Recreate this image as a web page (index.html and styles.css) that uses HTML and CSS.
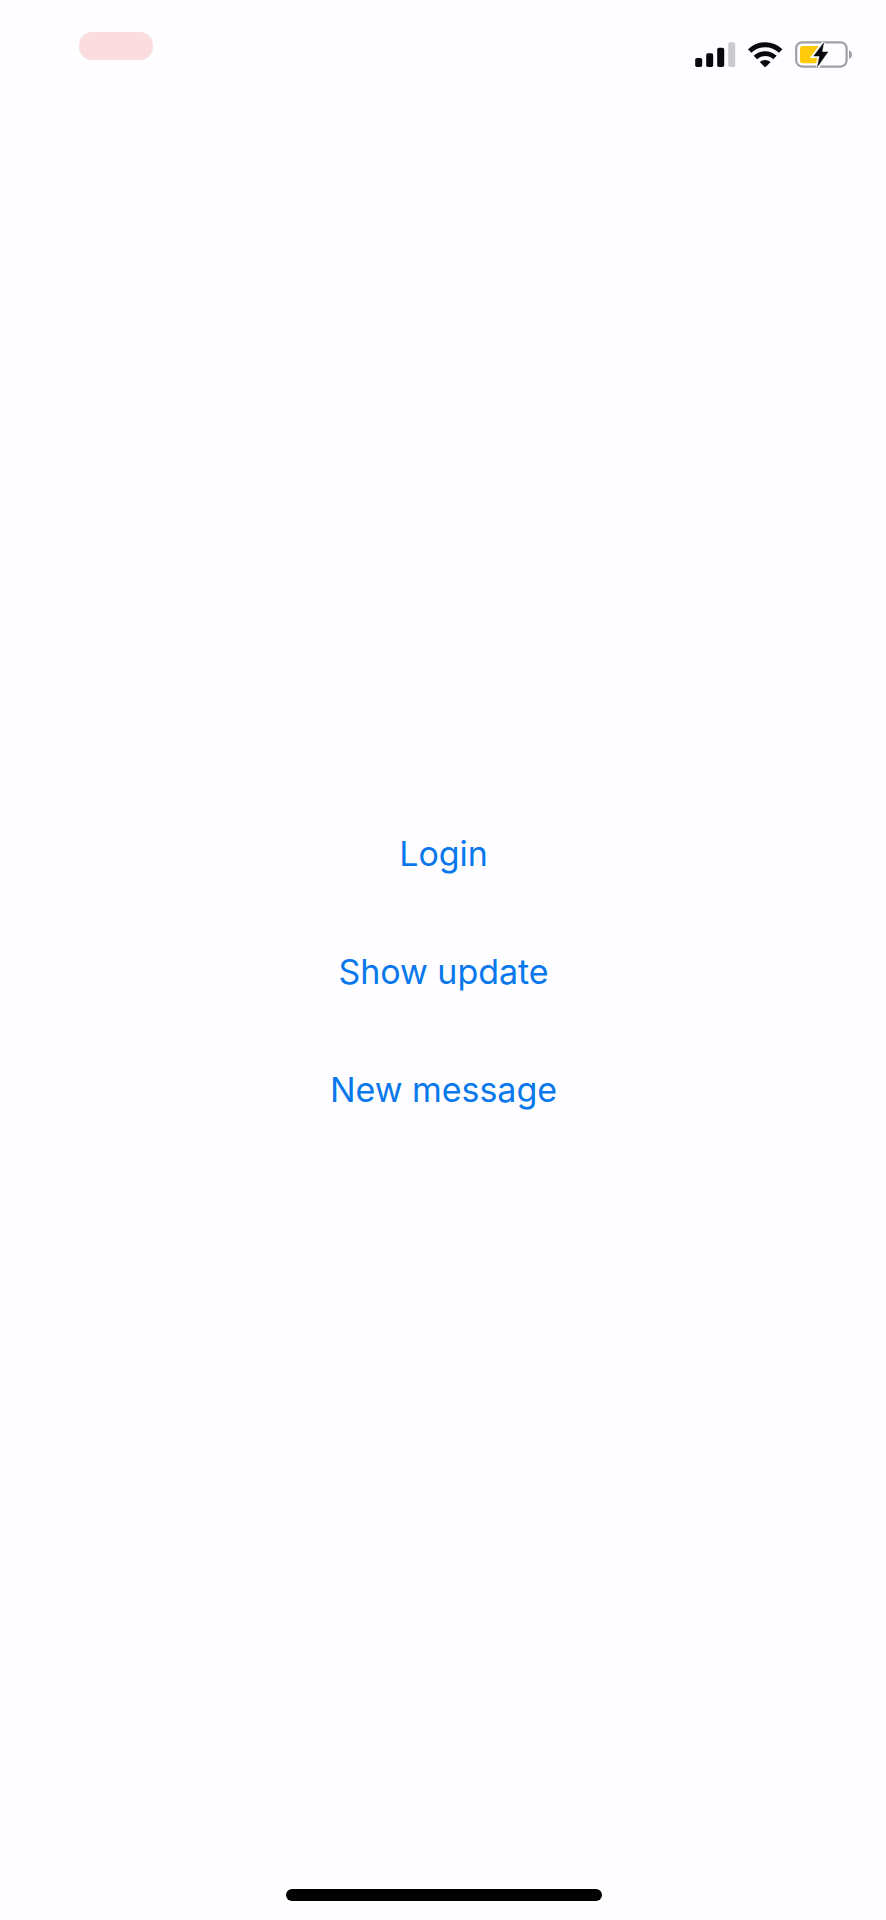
FILE: index.html
```html
<!DOCTYPE html>
<html lang="en">
<head>
<meta charset="utf-8">
<title>Home</title>
<link rel="stylesheet" href="styles.css">
</head>
<body>
<div class="screen">
  <header class="status-bar">
    <div class="time-pill"></div>
    <div class="indicators">
      <svg class="signal" width="41" height="26" viewBox="0 0 41 26">
        <rect x="0.2" y="16" width="7" height="9" rx="1.8"/>
        <rect x="11.2" y="11.3" width="7" height="13.7" rx="1.8"/>
        <rect x="22.2" y="5.8" width="7" height="19.2" rx="1.8"/>
        <rect class="signal-off" x="33.2" y="0.3" width="7" height="24.7" rx="1.8"/>
      </svg>
      <svg class="wifi" width="36" height="26" viewBox="0 0 36 26">
        <path class="wave" d="M2.7 9 A22.3 22.3 0 0 1 33.7 9"/>
        <path class="wave" d="M8.4 15.6 A14 14 0 0 1 28 15.6"/>
        <path d="M12.7 20 Q18.2 15.8 23.7 20 L18.9 24.7 Q18.2 25.3 17.5 24.7 Z"/>
      </svg>
      <svg class="battery" width="58" height="30" viewBox="0 0 58 30">
        <rect class="shell" x="1.2" y="2.3" width="50.4" height="24.3" rx="6"/>
        <rect class="charge" x="5" y="6" width="21" height="17.2" rx="2.5"/>
        <path class="cap" d="M54 10.2 Q57 11.5 57 14.6 Q57 17.7 54 19 Z"/>
        <path class="bolt-gap" d="M28.6 3 L18.8 16 H24.6 L22.6 26.5 L32.8 12 H26.9 Z"/>
        <path class="bolt" d="M28.6 3 L18.8 16 H24.6 L22.6 26.5 L32.8 12 H26.9 Z"/>
      </svg>
    </div>
  </header>
  <main class="actions">
    <button class="action login">Login</button>
    <button class="action update">Show update</button>
    <button class="action message">New message</button>
  </main>
  <footer class="home-area"><div class="home-bar"></div></footer>
</div>
</body>
</html>
```
FILE: styles.css
```css
body { margin: 0; background: #fefdff; }
.screen {
  box-sizing: border-box;
  display: flex;
  flex-direction: column;
  width: 886px;
  height: 1920px;
  background: #fefdff;
  font-family: Inter, "Liberation Sans", sans-serif;
}
.status-bar {
  box-sizing: border-box;
  display: flex;
  justify-content: space-between;
  align-items: flex-start;
  height: 100px;
  padding: 32px 33px 0 79px;
}
.time-pill { width: 74px; height: 28px; border-radius: 13px; background: #fbdde0; }
.indicators { display: flex; align-items: center; padding-top: 8px; }
.signal { fill: #09080b; margin-right: 11px; }
.signal-off { fill: #cccacd; }
.wifi { fill: #09080b; margin-right: 12px; }
.wave { fill: none; stroke: #09080b; stroke-width: 4.9; }
.shell { fill: none; stroke: #a09fa3; stroke-width: 2.2; }
.charge { fill: #ffca0a; }
.cap { fill: #a09fa3; }
.bolt { fill: #09080b; stroke: #09080b; stroke-width: 0.5; }
.bolt-gap { fill: #fefdff; stroke: #fefdff; stroke-width: 4; }
.actions {
  display: flex;
  flex: 1;
  flex-direction: column;
  align-items: center;
  gap: 58px;
  padding-top: 724px;
}
.action {
  height: 60px;
  padding: 0 0 0 1px;
  border: 0;
  background: none;
  color: #0878ec;
  font: 400 34px/60px Inter, "Liberation Sans", sans-serif;
  letter-spacing: -0.05px;
  white-space: nowrap;
}
.home-area { display: flex; justify-content: center; padding: 0 0 19px 2px; }
.home-bar { width: 316px; height: 12px; border-radius: 6px; background: #000; }
```
